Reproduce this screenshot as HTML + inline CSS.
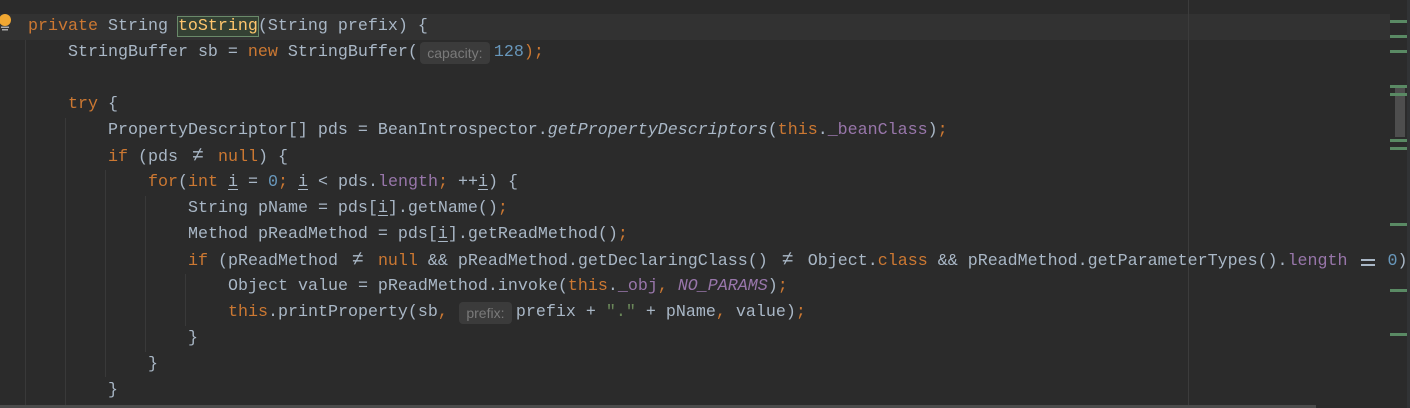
<!DOCTYPE html>
<html><head><meta charset="utf-8"><style>
html,body{margin:0;padding:0}
body{width:1410px;height:408px;background:#2b2b2b;position:relative;overflow:hidden;font-family:"Liberation Mono",monospace;font-size:16.67px;color:#a9b7c6}
.cur{position:absolute;left:0;top:14px;width:1390px;height:26px;background:#323232}
.ln{position:absolute;height:26px;line-height:26px;white-space:pre}
.k{color:#cc7832}.f{color:#9876aa}.n{color:#6897bb}.s{color:#6a8759}.i{font-style:italic}
.fi{color:#9876aa;font-style:italic}
.u{text-decoration:underline;text-underline-offset:3px}
.lig{display:inline-block;width:20px;text-align:center}
.ne{font-size:20px;line-height:26px}
.eq{display:inline-block;width:20px;height:26px;vertical-align:top;position:relative}
.eq:before,.eq:after{content:"";position:absolute;left:3px;width:14px;height:2px;background:#a9b7c6}
.eq:before{top:11px}.eq:after{top:16px}
.h{display:inline-block;height:22px;line-height:22px;background:#3b3b3b;color:#7a7a7a;border-radius:4px;font-family:"Liberation Sans",sans-serif;font-size:14px;text-align:center;vertical-align:top;margin-top:2px}
.g{position:absolute;width:1px;background:#393939}
.sel{background:#344134;outline:1px solid #6a8a6a;color:#ffc66d}
.m{position:absolute;left:1390px;width:17px;height:3px;background:#5a8a64}
</style></head><body>
<div class="cur"></div>
<div class="g" style="left:25px;top:40px;height:368px"></div>
<div class="g" style="left:65px;top:118px;height:290px"></div>
<div class="g" style="left:105px;top:170px;height:207px"></div>
<div class="g" style="left:145px;top:196px;height:156px"></div>
<div class="g" style="left:185px;top:274px;height:52px"></div>
<div class="g" style="left:1188px;top:0;height:408px;background:#3c3c3c"></div>
<svg style="position:absolute;left:0;top:13px" width="12" height="20"><circle cx="5" cy="7" r="6" fill="#f0a732"/><rect x="1" y="13.5" width="8" height="1.5" fill="#aaa"/><rect x="2" y="16" width="6" height="1.5" fill="#aaa"/></svg>

<div class="ln" style="left:28px;top:14px"><span class="k">private</span> String <span class="sel">toString</span>(String prefix) {</div>
<div class="ln" style="left:68px;top:40px">StringBuffer sb = <span class="k">new</span> StringBuffer(<span class="h" style="width:70px;margin-left:2px;margin-right:4px">capacity:</span><span class="n">128</span><span class="k">);</span></div>
<div class="ln" style="left:68px;top:92px"><span class="k">try</span> {</div>
<div class="ln" style="left:108px;top:118px">PropertyDescriptor[] pds = BeanIntrospector.<span class="i">getPropertyDescriptors</span>(<span class="k">this</span>.<span class="f">_beanClass</span>)<span class="k">;</span></div>
<div class="ln" style="left:108px;top:144px"><span class="k">if</span> (pds <span class="lig ne">≠</span> <span class="k">null</span>) {</div>
<div class="ln" style="left:148px;top:170px"><span class="k">for</span>(<span class="k">int</span> <span class="u">i</span> = <span class="n">0</span><span class="k">;</span> <span class="u">i</span> &lt; pds.<span class="f">length</span><span class="k">;</span> <span class="lig">++</span><span class="u">i</span>) {</div>
<div class="ln" style="left:188px;top:196px">String pName = pds[<span class="u">i</span>].getName()<span class="k">;</span></div>
<div class="ln" style="left:188px;top:222px">Method pReadMethod = pds[<span class="u">i</span>].getReadMethod()<span class="k">;</span></div>
<div class="ln" style="left:188px;top:248px"><span class="k">if</span> (pReadMethod <span class="lig ne">≠</span> <span class="k">null</span> &amp;&amp; pReadMethod.getDeclaringClass() <span class="lig ne">≠</span> Object.<span class="k">class</span> &amp;&amp; pReadMethod.getParameterTypes().<span class="f">length</span> <span class="eq"></span> <span class="n">0</span>)</div>
<div class="ln" style="left:228px;top:274px">Object value = pReadMethod.invoke(<span class="k">this</span>.<span class="f">_obj</span><span class="k">,</span> <span class="fi">NO_PARAMS</span>)<span class="k">;</span></div>
<div class="ln" style="left:228px;top:300px"><span class="k">this</span>.printProperty(sb<span class="k">,</span> <span class="h" style="width:53px;margin-left:1px;margin-right:4px">prefix:</span>prefix + <span class="s">"."</span> + pName<span class="k">,</span> value)<span class="k">;</span></div>
<div class="ln" style="left:188px;top:326px">}</div>
<div class="ln" style="left:148px;top:352px">}</div>
<div class="ln" style="left:108px;top:378px">}</div>

<div style="position:absolute;left:1407px;top:0;width:3px;height:408px;background:#313335"></div>
<div style="position:absolute;left:1395px;top:86px;width:10px;height:51px;background:#4e4e4e"></div>
<div class="m" style="top:20px"></div>
<div class="m" style="top:35px"></div>
<div class="m" style="top:50px"></div>
<div class="m" style="top:85px"></div>
<div class="m" style="top:93px"></div>
<div class="m" style="top:139px"></div>
<div class="m" style="top:147px"></div>
<div class="m" style="top:223px"></div>
<div class="m" style="top:289px"></div>
<div class="m" style="top:333px"></div>
<div style="position:absolute;left:0;top:405px;width:1316px;height:3px;background:#4b4b4b"></div>
</body></html>
